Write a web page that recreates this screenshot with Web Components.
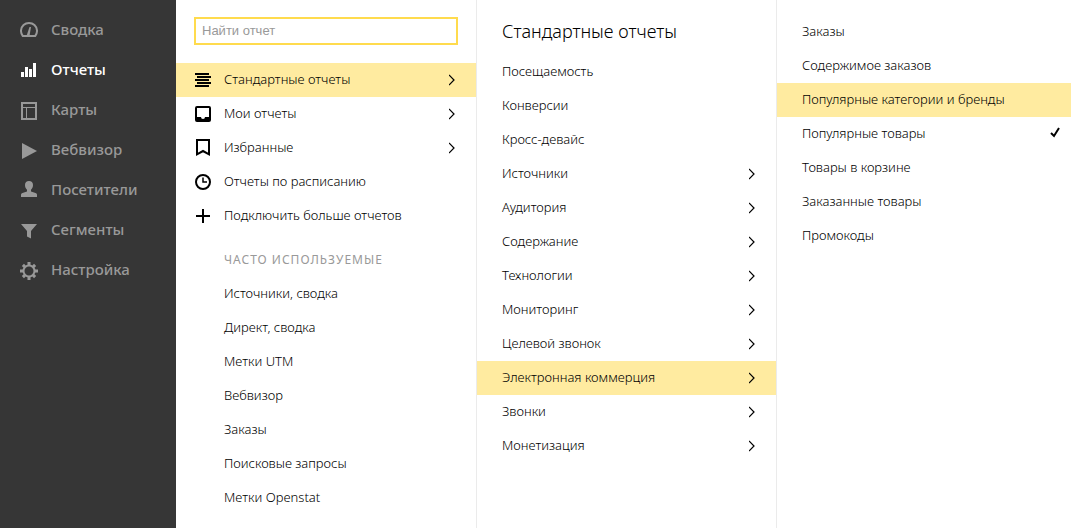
<!DOCTYPE html>
<html lang="ru">
<head>
<meta charset="utf-8">
<title>Отчеты</title>
<style>
  body {
    margin: 0;
    font-family: "Noto Sans", sans-serif;
    color: #000;
    background: #fff;
  }
</style>
</head>
<body>
<report-app></report-app>

<script>
const ICONS = {
  summary: `<path d="M2.800 16A8 8 0 1 1 15.200 16Z" fill="none" stroke="currentColor" stroke-width="2"/><path d="M6.500 16L9.500 7h1.500L9.500 16z"/>`,
  reports: `<path d="M1 12h3v5H1zM5 7h3v10H5zM9 9h3v8H9zM13 3h3v14h-3z"/>`,
  maps: `<path d="M2 3h14v16H2z" fill="none" stroke="currentColor" stroke-width="2"/><path d="M2 7.500h14M6.500 8v11" fill="none" stroke="currentColor"/>`,
  play: `<path d="M2 3l15 8-15 8z"/>`,
  visitors: `<path d="M9 1c-2.500 0-4 1.600-4 4 0 2 .8 3.700 2 4.800v1.700L2.500 13C1.500 13.400 1 14 1 15v2h16v-2c0-1-.5-1.600-1.500-2L11 11.500V9.800c1.200-1.100 2-2.800 2-4.800 0-2.400-1.500-4-4-4z"/>`,
  segments: `<path d="M1 4h16l-6 7v7.500l-4-2V11z"/>`,
  settings: `<circle cx="9" cy="11" r="5.500" fill="none" stroke="currentColor" stroke-width="2"/><path d="M9 2v3M9 17v3M0 11h3M15 11h3M2.900 4.900l2 2M13.100 15.100l2 2M2.900 17.100l2-2M13.100 6.900l2-2" fill="none" stroke="currentColor" stroke-width="3"/>`,
  list: `<path d="M1 3h14v2H1zM3 6h14v2H3zM1 9h14v2H1zM3 12h14v2H3zM1 15h14v2H1z"/>`,
  inbox: `<path fill-rule="evenodd" d="M3 2h12q2 0 2 2v12q0 2-2 2H3q-2 0-2-2V4q0-2 2-2zM3 4v9h4q0 2 2 2t2-2h4V4z"/>`,
  bookmark: `<path d="M3 2h12v14.300l-6-3.300-6 3.300z" fill="none" stroke="currentColor" stroke-width="2"/>`,
  clock: `<circle cx="9" cy="10" r="7" fill="none" stroke="currentColor" stroke-width="2"/><path d="M9 5.500V10h4" fill="none" stroke="currentColor" stroke-width="1.500"/>`,
  plus: `<path d="M8 3h2v6h6v2h-6v6H8v-6H2V9h6z"/>`,
};

class ReportIcon extends HTMLElement {
  constructor() {
    super();
    this.attachShadow({ mode: "open" });
  }

  connectedCallback() {
    this.shadowRoot.innerHTML = `
      <style>
        :host { display: block; flex: none; }
        svg { display: block; width: 18px; height: 20px; fill: currentColor; }
      </style>
      <svg viewBox="0 0 18 20" aria-hidden="true">${ICONS[this.getAttribute("name")]}</svg>
    `;
  }
}

class SideLink extends HTMLElement {
  constructor() {
    super();
    this.attachShadow({ mode: "open" });
  }

  connectedCallback() {
    this.shadowRoot.innerHTML = `
      <style>
        :host { display: block; color: #999; }
        :host([active]) { color: #fff; }
        a {
          display: flex;
          align-items: center;
          gap: 13px;
          height: 40px;
          padding: 0 20px;
          color: inherit;
          font-size: 15px;
          font-weight: 500;
          text-decoration: none;
        }
        a:hover { color: #fff; }
        .label { padding-bottom: 2px; }
      </style>
      <a href="#">
        <report-icon name="${this.getAttribute("icon")}"></report-icon>
        <span class="label"><slot></slot></span>
      </a>
    `;
  }
}

class MenuLink extends HTMLElement {
  constructor() {
    super();
    this.attachShadow({ mode: "open" });
  }

  get _mark() {
    if (this.hasAttribute("more")) {
      return `<svg class="more" viewBox="0 0 6 12" aria-hidden="true"><path d="M0 1l5 5-5 5"/></svg>`;
    }
    if (this.hasAttribute("checked")) {
      return `<svg class="check" viewBox="0 0 10 14" aria-hidden="true"><path d="M1 6l3 3 5-8"/></svg>`;
    }
    return "";
  }

  connectedCallback() {
    const icon = this.getAttribute("icon");

    this.shadowRoot.innerHTML = `
      <style>
        :host { display: block; }
        a {
          display: flex;
          align-items: center;
          height: 34px;
          padding: 0 21px 0 var(--menu-indent, 25px);
          color: #000;
          font-size: 13px;
          font-weight: 300;
          text-decoration: none;
        }
        a.with-icon { gap: 12px; padding-left: 18px; }
        a:hover, :host([active]) a { background: #ffeba0; }
        .label { flex: 1; padding-bottom: 2px; white-space: nowrap; }
        svg { fill: none; stroke: currentColor; }
        .more { width: 6px; height: 12px; stroke-width: 1.2; }
        .check { width: 10px; height: 14px; stroke-width: 2; margin-right: -10px; }
      </style>
      <a href="#" class="${icon ? "with-icon" : ""}">
        ${icon ? `<report-icon name="${icon}"></report-icon>` : ""}
        <span class="label"><slot></slot></span>
        ${this._mark}
      </a>
    `;
  }
}

class ReportSearch extends HTMLElement {
  constructor() {
    super();
    this.attachShadow({ mode: "open" });
  }

  connectedCallback() {
    this.shadowRoot.innerHTML = `
      <style>
        :host { display: block; padding: 0 18px; }
        input {
          display: block;
          box-sizing: border-box;
          width: 100%;
          height: 28px;
          padding: 0 6px 2px;
          border: 2px solid #ffdb4d;
          border-radius: 0;
          outline: none;
          background: #fff;
          font: 13px "Liberation Sans", sans-serif;
        }
        input::placeholder { color: #999; opacity: 1; }
      </style>
      <input type="text" placeholder="Найти отчет" aria-label="Найти отчет">
    `;
  }
}

class MenuColumn extends HTMLElement {
  constructor() {
    super();
    this.attachShadow({ mode: "open" });
  }

  connectedCallback() {
    this.shadowRoot.innerHTML = `
      <style>
        :host {
          display: block;
          box-sizing: border-box;
          flex: 0 0 300px;
          padding: 15px 0 13px;
        }
        :host([divided]) { border-left: 1px solid #ebebeb; }
        :host([wide]) { flex: 1 1 0; }
        ::slotted(h2) {
          margin: 0 0 8px;
          padding: 0 25px;
          font-size: 18px;
          font-weight: 350;
          line-height: 32px;
        }
        ::slotted(h3) {
          margin: 0;
          padding: 10px 48px 0;
          color: #999;
          font-size: 12px;
          font-weight: 400;
          line-height: 34px;
          letter-spacing: 1px;
          text-transform: uppercase;
        }
        ::slotted(report-search) { padding-top: 2px; margin-bottom: 18px; }
      </style>
      <slot></slot>
    `;
  }
}

class ReportApp extends HTMLElement {
  constructor() {
    super();
    this.attachShadow({ mode: "open" });
  }

  connectedCallback() {
    this.shadowRoot.innerHTML = `
      <style>
        :host { display: flex; min-height: 100vh; }
        nav {
          box-sizing: border-box;
          flex: 0 0 176px;
          padding: 10px 0;
          background: #363636;
        }
        .main { --menu-indent: 48px; }
      </style>
      <nav>
        <side-link icon="summary">Сводка</side-link>
        <side-link icon="reports" active>Отчеты</side-link>
        <side-link icon="maps">Карты</side-link>
        <side-link icon="play">Вебвизор</side-link>
        <side-link icon="visitors">Посетители</side-link>
        <side-link icon="segments">Сегменты</side-link>
        <side-link icon="settings">Настройка</side-link>
      </nav>
      <menu-column class="main">
        <report-search></report-search>
        <menu-link icon="list" more active>Стандартные отчеты</menu-link>
        <menu-link icon="inbox" more>Мои отчеты</menu-link>
        <menu-link icon="bookmark" more>Избранные</menu-link>
        <menu-link icon="clock">Отчеты по расписанию</menu-link>
        <menu-link icon="plus">Подключить больше отчетов</menu-link>
        <h3>Часто используемые</h3>
        <menu-link>Источники, сводка</menu-link>
        <menu-link>Директ, сводка</menu-link>
        <menu-link>Метки UTM</menu-link>
        <menu-link>Вебвизор</menu-link>
        <menu-link>Заказы</menu-link>
        <menu-link>Поисковые запросы</menu-link>
        <menu-link>Метки Openstat</menu-link>
      </menu-column>
      <menu-column divided>
        <h2>Стандартные отчеты</h2>
        <menu-link>Посещаемость</menu-link>
        <menu-link>Конверсии</menu-link>
        <menu-link>Кросс-девайс</menu-link>
        <menu-link more>Источники</menu-link>
        <menu-link more>Аудитория</menu-link>
        <menu-link more>Содержание</menu-link>
        <menu-link more>Технологии</menu-link>
        <menu-link more>Мониторинг</menu-link>
        <menu-link more>Целевой звонок</menu-link>
        <menu-link more active>Электронная коммерция</menu-link>
        <menu-link more>Звонки</menu-link>
        <menu-link more>Монетизация</menu-link>
      </menu-column>
      <menu-column divided wide>
        <menu-link>Заказы</menu-link>
        <menu-link>Содержимое заказов</menu-link>
        <menu-link active>Популярные категории и бренды</menu-link>
        <menu-link checked>Популярные товары</menu-link>
        <menu-link>Товары в корзине</menu-link>
        <menu-link>Заказанные товары</menu-link>
        <menu-link>Промокоды</menu-link>
      </menu-column>
    `;
  }
}

customElements.define("report-icon", ReportIcon);
customElements.define("side-link", SideLink);
customElements.define("menu-link", MenuLink);
customElements.define("report-search", ReportSearch);
customElements.define("menu-column", MenuColumn);
customElements.define("report-app", ReportApp);
</script>
</body>
</html>
